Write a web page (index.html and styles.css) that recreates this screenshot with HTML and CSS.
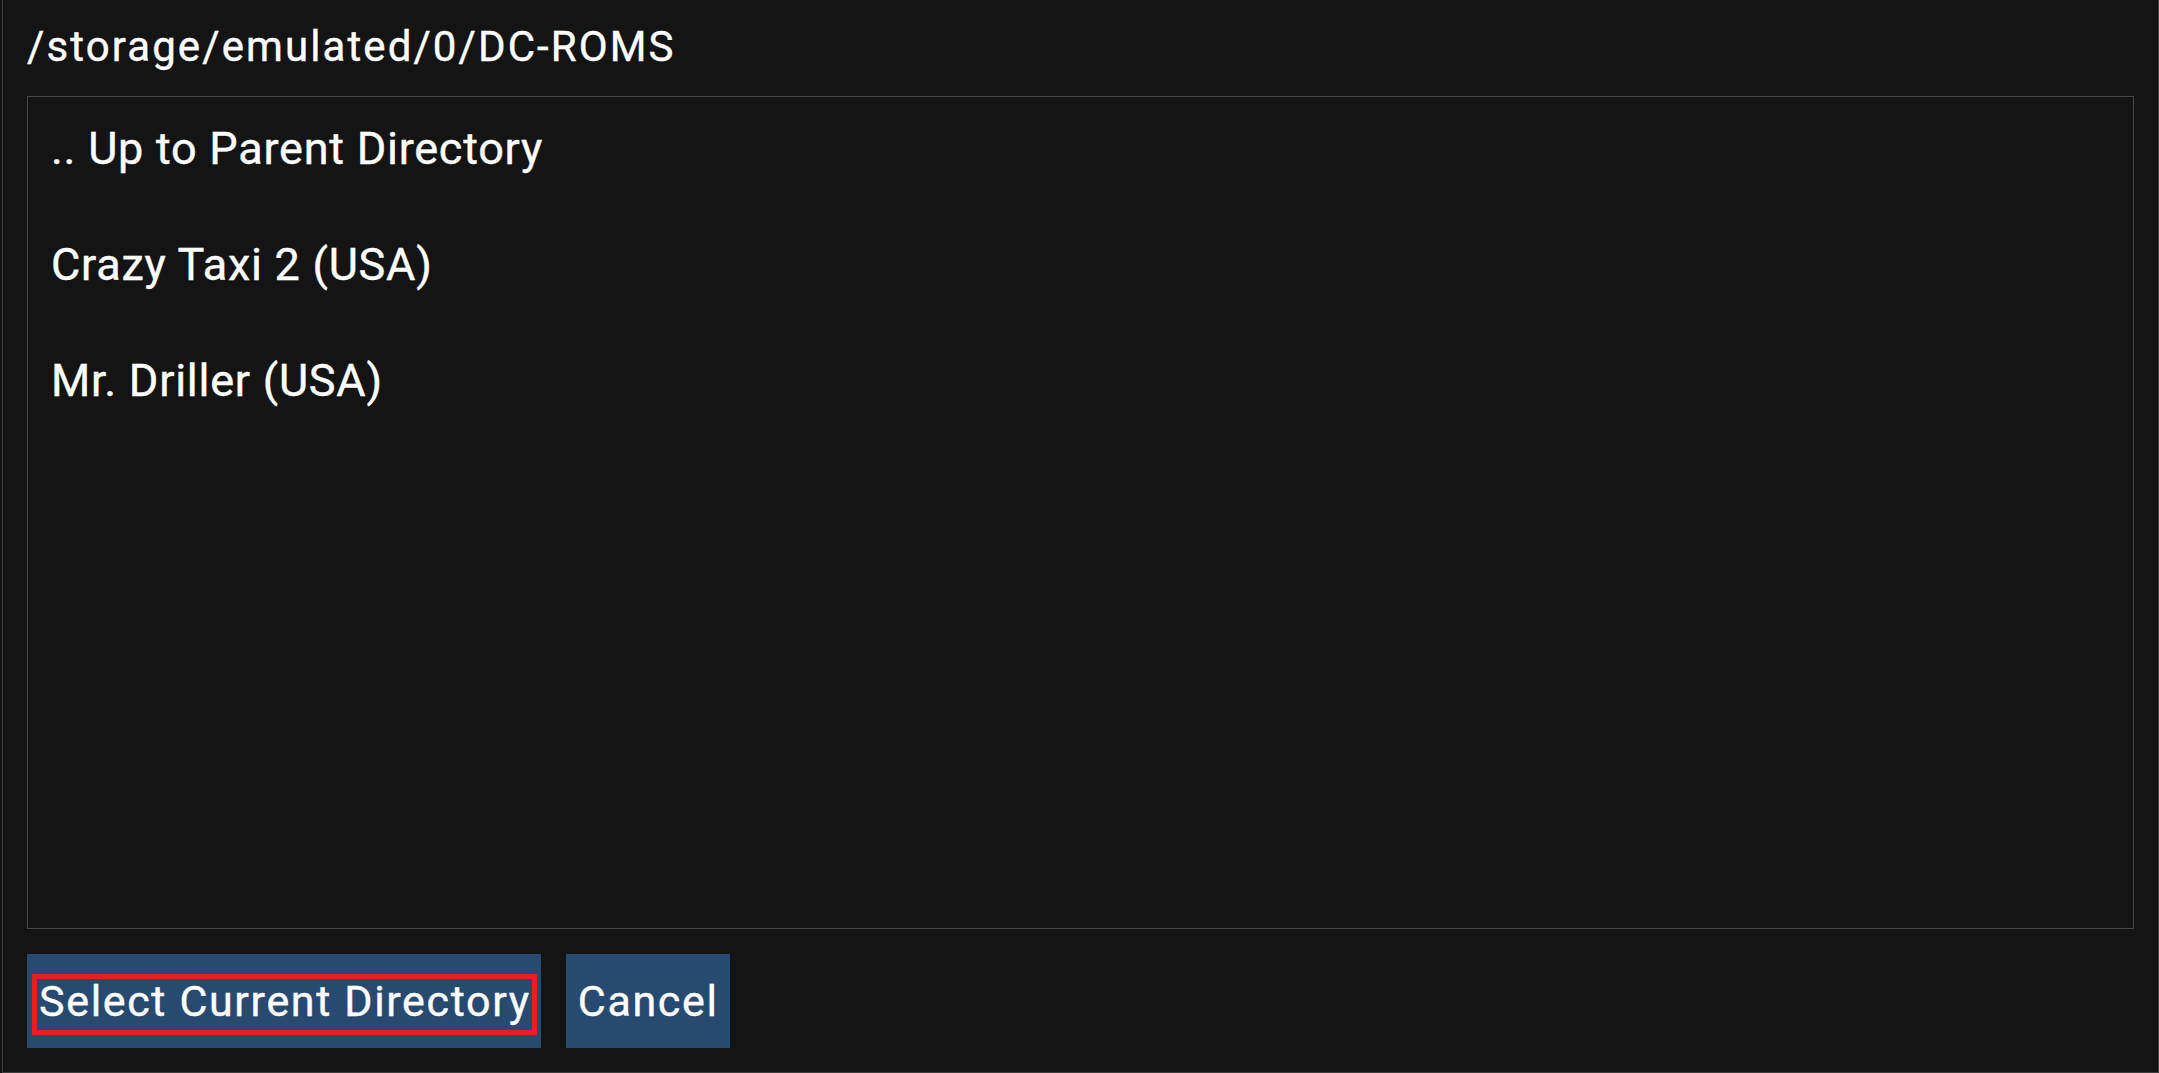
FILE: index.html
```html
<!DOCTYPE html>
<html>
<head>
<meta charset="utf-8">
<link rel="stylesheet" href="styles.css">
</head>
<body>
<div class="dialog">
  <div class="title">/storage/emulated/0/DC-ROMS</div>
  <div class="list">
    <div class="item">.. Up to Parent Directory</div>
    <div class="item">Crazy Taxi 2 (USA)</div>
    <div class="item">Mr. Driller (USA)</div>
  </div>
  <div class="buttons">
    <button class="btn btn-select"><span class="label focused">Select Current Directory</span></button>
    <button class="btn btn-cancel"><span class="label">Cancel</span></button>
  </div>
</div>
</body>
</html>
```
FILE: styles.css
```css
html, body {
  margin: 0;
  padding: 0;
  background: #141414;
}
body {
  width: 2159px;
  height: 1073px;
  overflow: hidden;
  font-family: Roboto, "Noto Sans", sans-serif;
  color: #ffffff;
  -webkit-text-stroke: 0.4px #ffffff;
}
.dialog {
  box-sizing: border-box;
  margin-left: 2px;
  width: 2157px;
  height: 1073px;
  border: 1px solid #3c3c3c;
  border-top: none;
  padding: 0 24px 24px 24px;
  display: flex;
  flex-direction: column;
}
.title {
  font-size: 42px;
  font-weight: 400;
  letter-spacing: 2.1px;
  height: 96px;
  line-height: 49px;
  padding-top: 22px;
  box-sizing: border-box;
  white-space: nowrap;
}
.list {
  flex: 1;
  border: 1px solid #464646;
  padding: 0 23px;
  display: flex;
  flex-direction: column;
}
.item {
  font-size: 45px;
  font-weight: 400;
  letter-spacing: 0.75px;
  line-height: 104px;
  height: 116px;
  white-space: nowrap;
}
.buttons {
  margin-top: 25px;
  display: flex;
  gap: 25px;
  height: 94px;
}
.btn {
  border: none;
  margin: 0;
  background: #284a70;
  color: #ffffff;
  font-family: Roboto, "Noto Sans", sans-serif;
  font-size: 43px;
  font-weight: 400;
  letter-spacing: 1.65px;
  padding: 20px 4px 13px 5px;
  height: 94px;
  box-sizing: border-box;
  display: flex;
  cursor: pointer;
  -webkit-text-stroke: 0.4px #ffffff;
}
.label {
  display: block;
  border: 5px solid transparent;
  padding: 0 1px 7px 2px;
  line-height: 44px;
  white-space: nowrap;
}
.btn-cancel .label {
  padding-right: 2px;
}
.label.focused {
  border-color: #ed1c24;
}
```
